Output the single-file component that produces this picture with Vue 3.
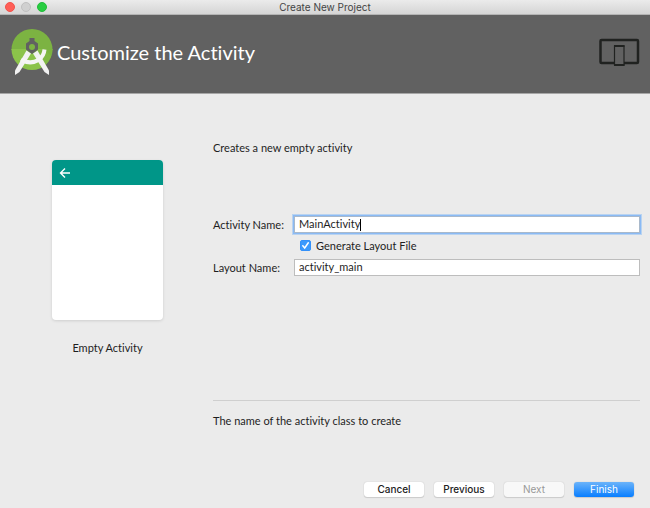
<script setup>
import { ref } from 'vue'

const activityName = ref('MainActivity')
const layoutName = ref('activity_main')
const generateLayout = ref(true)
</script>

<template>
  <div class="window">
    <div class="titlebar">
      <div class="lights">
        <button class="light close" type="button" aria-label="Close"></button>
        <button class="light minimize" type="button" aria-label="Minimize" disabled></button>
        <button class="light expand" type="button" aria-label="Zoom"></button>
      </div>
      <span class="window-title">Create New Project</span>
    </div>

    <header class="banner">
      <svg class="logo" width="44" height="50" viewBox="0 0 44 50" aria-hidden="true">
        <defs>
          <clipPath id="disc"><circle cx="21" cy="21.500" r="20.500" /></clipPath>
        </defs>
        <g clip-path="url(#disc)">
          <rect width="44" height="22" fill="#7cb342" />
          <rect y="21" width="44" height="24" fill="#8bc34a" />
          <path d="M23 11 L44 32 V21 H33 L25 13Z" fill="#689f38" opacity=".45" />
          <path d="M22 24 L40 42 L44 32 L33 21Z" fill="#689f38" opacity=".3" />
        </g>
        <path d="M15.500 22.500 L20 25.500 L8.500 44 L4 47 V42.500Z" fill="#f2f2f2" />
        <path d="M26.500 22.500 L22 25.500 L33.500 44 L38 47 V42.500Z" fill="#f2f2f2" />
        <path d="M10 31.500 Q19 37 27.500 32 Q33 28 33.500 21.500" fill="none" stroke="#f5f5f5" stroke-width="4" />
        <path d="M18.500 10 H23.500 V13 L27 15.500 V21.500 L21 26 L15 21.500 V15.500 L18.500 13Z" fill="#616161" />
        <circle cx="21" cy="19" r="3" fill="#7cb342" />
      </svg>
      <h1>Customize the Activity</h1>
      <svg class="devices" width="42" height="29" viewBox="0 0 42 29" aria-hidden="true">
        <rect x="2.500" y="2" width="37.500" height="23" rx="1" fill="none" stroke="#202220" stroke-width="2.500" />
        <rect x="16.500" y="8" width="9.500" height="19" fill="#616161" stroke="#202220" stroke-width="1.200" />
        <path d="M16 8H26.500M16 27H26.500" stroke="#202220" stroke-width="1.800" />
      </svg>
    </header>

    <main class="content">
      <figure class="preview">
        <div class="phone">
          <div class="appbar">
            <svg width="12" height="12" viewBox="0 0 12 12" aria-hidden="true">
              <path d="M11 6H2M6 1.500L1.500 6L6 10.500" fill="none" stroke="#fff" stroke-width="1.400" />
            </svg>
          </div>
        </div>
        <figcaption>Empty Activity</figcaption>
      </figure>

      <section class="details">
        <p class="summary">Creates a new empty activity</p>
        <form id="activity-form" class="fields" @submit.prevent>
          <label for="activity-name">Activity Name:</label>
          <div class="field active">
            <input id="activity-name" v-model="activityName" class="growing" type="text" />
            <span class="caret"></span>
          </div>
          <label class="check">
            <input v-model="generateLayout" type="checkbox" />
            <svg v-if="generateLayout" class="tick" width="11" height="11" viewBox="0 0 11 11" aria-hidden="true">
              <path d="M2.800 5.800L4.700 8L8.300 2.800" fill="none" stroke="#fff" stroke-width="1.500" stroke-linecap="round" />
            </svg>
            <span>Generate Layout File</span>
          </label>
          <label for="layout-name">Layout Name:</label>
          <div class="field">
            <input id="layout-name" v-model="layoutName" type="text" />
          </div>
        </form>
        <p class="hint">The name of the activity class to create</p>
      </section>
    </main>

    <footer class="actions">
      <button type="button">Cancel</button>
      <button type="button">Previous</button>
      <button type="button" disabled>Next</button>
      <button class="primary" type="submit" form="activity-form">Finish</button>
    </footer>
  </div>
</template>

<style>
body {
  margin: 0;
  background: #ebebeb;
}
</style>

<style scoped>
* {
  box-sizing: border-box;
}

.window {
  display: flex;
  flex-direction: column;
  min-height: 100vh;
  background: #ebebeb;
  color: #1e1e1e;
  font-family: Lato, "Noto Sans", sans-serif;
  font-size: 11px;
  font-variant-ligatures: none;
  line-height: 16px;
}

.titlebar {
  display: grid;
  grid-template-columns: 1fr auto 1fr;
  align-items: center;
  height: 15px;
  padding: 0 5px;
  border-bottom: 1px solid #b4b4b4;
  background: linear-gradient(#ebebeb, #d5d5d5);
}

.lights {
  display: flex;
  gap: 6px;
}

.light {
  width: 10px;
  height: 10px;
  padding: 0;
  border: 1px solid transparent;
  border-radius: 50%;
}

.close {
  border-color: #f2524b;
  background: #ff5f57;
}

.minimize {
  border-color: #c0c0c0;
  background: #d0d0d0;
}

.expand {
  border-color: #20bd3a;
  background: #28cd41;
}

.window-title {
  color: #444;
  font-family: Inter, sans-serif;
  font-size: 10px;
  line-height: 14px;
}

.banner {
  display: flex;
  align-items: center;
  height: 79px;
  padding: 0 10px 4px 11px;
  border-bottom: 1px solid #a6a6a6;
  background: #616161;
}

.logo {
  margin-top: 1px;
}

h1 {
  flex: 1;
  margin: 0 0 0 2px;
  color: #fff;
  font-size: 20px;
  font-weight: 400;
  line-height: 26px;
}

.content {
  display: flex;
  flex: 1;
  padding: 0 10px 0 52px;
}

.preview {
  width: 111px;
  margin: 66px 50px 0 0;
  text-align: center;
}

.phone {
  height: 160px;
  overflow: hidden;
  border-radius: 4px;
  background: #fff;
  box-shadow: 0 1px 3px rgba(0, 0, 0, 0.12);
}

.appbar {
  display: flex;
  align-items: center;
  height: 25px;
  padding-left: 7px;
  background: #009688;
}

figcaption {
  margin-top: 20px;
}

.details {
  flex: 1;
}

.summary {
  margin: 46px 0 60px;
}

.fields {
  display: grid;
  grid-template-columns: 73px 1fr;
  column-gap: 8px;
  row-gap: 5px;
  align-items: center;
}

.fields label {
  line-height: 15px;
  padding-bottom: 1px;
}

.field {
  display: flex;
  align-items: center;
  height: 17px;
  border: 1px solid #bdbdbd;
  background: #fff;
}

.field.active {
  border-color: #a9b9cb;
  box-shadow: 0 0 0 1px #8abaf5, 0 0 0 2px #b9d3f0;
}

.field input {
  flex: 1;
  min-width: 0;
  height: 15px;
  padding: 0 0 1px 4px;
  border: 0;
  outline: 0;
  background: transparent;
  color: #1e1e1e;
  font: inherit;
}

.field .growing {
  flex: none;
  field-sizing: content;
  caret-color: transparent;
}

.caret {
  width: 1px;
  height: 12px;
  background: #000;
}

.check {
  display: flex;
  position: relative;
  grid-column: 2;
  align-items: center;
  gap: 5px;
  padding-left: 6px;
}

.check input {
  width: 11px;
  height: 11px;
  margin: 0;
  border: 1px solid #b5b5b5;
  border-radius: 2px;
  appearance: none;
  background: #fff;
}

.check input:checked {
  border-color: #3391fa;
  background: #3b99fc;
}

.tick {
  position: absolute;
  left: 6px;
  pointer-events: none;
}

.hint {
  margin: 124px 0 0;
  padding-top: 12px;
  border-top: 1px solid #cfcfcf;
}

.actions {
  display: flex;
  justify-content: flex-end;
  gap: 10px;
  padding: 0 16px 11px;
}

.actions button {
  width: 60px;
  height: 15px;
  padding: 0;
  border: 0;
  border-radius: 3px;
  background: #fff;
  box-shadow: 0 0 1px rgba(0, 0, 0, 0.25), 0 1px 1px rgba(0, 0, 0, 0.12);
  color: #222;
  font-family: Inter, sans-serif;
  font-size: 10px;
  font-weight: 500;
  line-height: 15px;
}

.actions button:disabled {
  background: #f8f8f8;
  color: #999;
  font-weight: 400;
}

.actions .primary {
  background: linear-gradient(#6bb3fa, #087eff);
  color: #fff;
  font-weight: 400;
}
</style>
